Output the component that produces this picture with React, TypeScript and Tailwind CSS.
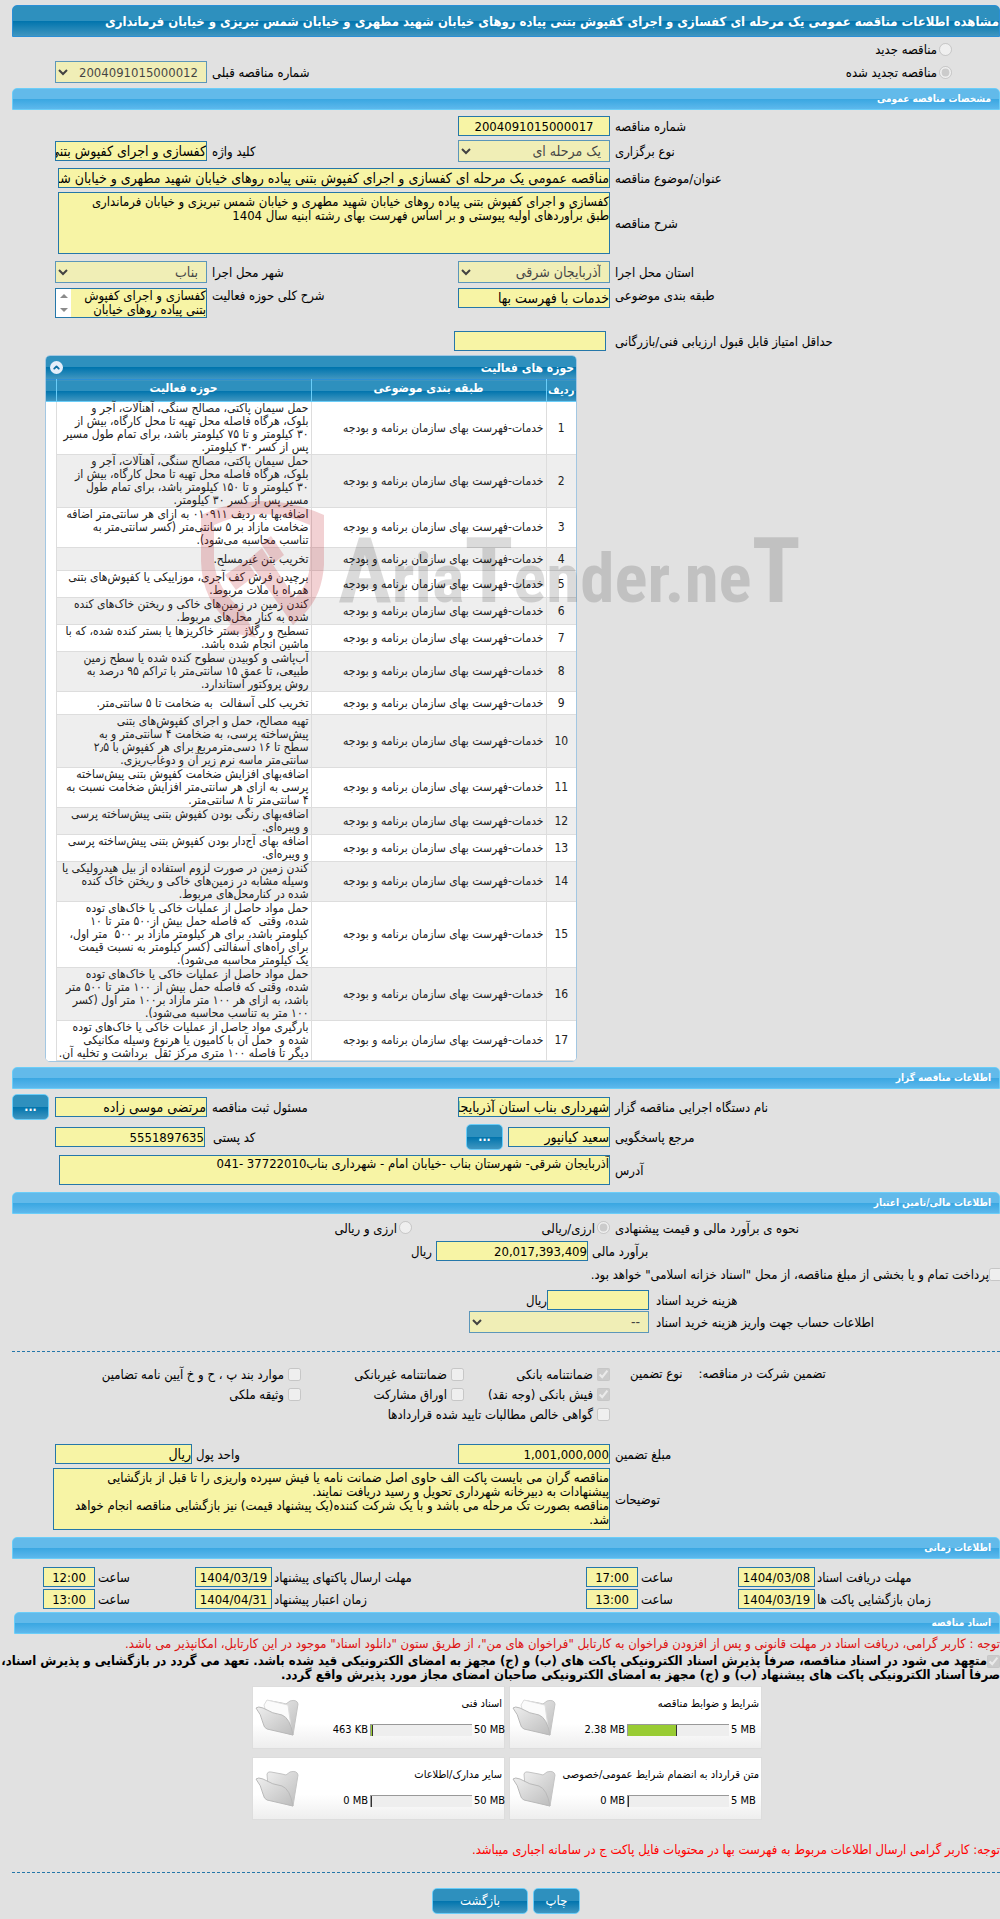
import React from 'react';
import { ChevronUp } from 'lucide-react';

const box = 'border border-[#2577a9] bg-[#f7f4a5] text-black outline-none';
const darkBar =
  'bg-[linear-gradient(to_bottom,#2e90be_0%,#2e90be_50%,#0074ad_50%,#4096c0_100%)] text-white';
const fieldRow = 'grid grid-cols-[1fr_152px_251px_152px_55px]';

const SectionBar: React.FC<{ title: string }> = ({ title }) => (
  <h2 className="ml-3 h-[22px] rounded-t-[5px] border border-[#6acdf8] bg-[linear-gradient(to_bottom,#62baea_0%,#62baea_48%,#38a6e1_48%,#5db8ec_100%)] pr-2 text-[10px] leading-5 font-bold text-white">
    {title}
  </h2>
);

const Label: React.FC<{ id: string; text: string; className?: string }> = ({ id, text, className = 'pl-[5px]' }) => (
  <label htmlFor={id} className={`pt-0.5 text-left leading-5 whitespace-nowrap ${className}`}>
    {text}
  </label>
);

const Field: React.FC<{ id: string; value?: string; numeric?: boolean; className?: string }> = ({
  id,
  value = '',
  numeric = false,
  className = '',
}) => (
  <input
    id={id}
    type="text"
    readOnly
    defaultValue={value}
    className={`${box} h-5 w-full min-w-0 ${numeric ? 'text-[13px]' : 'text-[14px]'} ${className}`}
  />
);

const Picker: React.FC<{ id: string; value: string; numeric?: boolean }> = ({ id, value, numeric = false }) => (
  <select id={id} disabled className={`${box} h-[22px] w-full px-1 opacity-70 ${numeric ? 'text-[13px]' : 'text-[14px]'}`}>
    <option>{value}</option>
  </select>
);

const Tick: React.FC<{ id: string; text: string; checked?: boolean; type?: string; className?: string }> = ({
  id,
  text,
  checked = false,
  type = 'checkbox',
  className = 'gap-1',
}) => (
  <span className={`flex items-center ${className}`}>
    <input id={id} type={type} disabled defaultChecked={checked} className="size-[13px] shrink-0" />
    <label htmlFor={id} className="pt-0.5 leading-[18px] whitespace-nowrap">
      {text}
    </label>
  </span>
);

const MoreButton: React.FC = () => (
  <button type="button" className={`${darkBar} h-[26px] w-[37px] rounded-[5px] border border-[#6acdf8] text-xs font-bold`}>
    ...
  </button>
);

const DashedLine: React.FC = () => <hr className="ml-3 border-0 border-t border-dashed border-[#2577a9]" />;

const activities: string[] = [
  'حمل سیمان پاکتی، مصالح سنگی، آهنآلات، آجر و\nبلوک، هرگاه فاصله محل تهیه تا محل کارگاه، بیش از\n۳۰ کیلومتر و تا ۷۵ کیلومتر باشد، برای تمام طول مسیر\nپس از کسر ۳۰ کیلومتر.',
  'حمل سیمان پاکتی، مصالح سنگی، آهنآلات، آجر و\nبلوک، هرگاه فاصله محل تهیه تا محل کارگاه، بیش از\n۳۰ کیلومتر و تا ۱۵۰ کیلومتر باشد، برای تمام طول\nمسیر پس از کسر ۳۰ کیلومتر.',
  'اضافه‌بها به ردیف ۰۱۰۹۱۱ به ازای هر سانتی‌متر اضافه\nضخامت مازاد بر ۵ سانتی‌متر (کسر سانتی‌متر به\nتناسب محاسبه می‌شود).',
  'تخریب بتن غیرمسلح.',
  'برچیدن فرش کف آجری، موزاییکی یا کفپوش‌های بتنی\nهمراه با ملات مربوط.',
  'کندن زمین در زمین‌های خاکی و ریختن خاک‌های کنده\nشده به کنار محل‌های مربوط.',
  'تسطیح و رگلاژ بستر خاکریزها یا بستر کنده شده، که با\nماشین انجام شده باشد.',
  'آب‌پاشی و کوبیدن سطوح کنده شده یا سطح زمین\nطبیعی، تا عمق ۱۵ سانتی‌متر با تراکم ۹۵ درصد به\nروش پروکتور استاندارد.',
  'تخریب کلی آسفالت  به ضخامت تا ۵ سانتی‌متر.',
  'تهیه مصالح، حمل و اجرای کفپوش‌های بتنی\nپیش‌ساخته پرسی، به ضخامت ۴ سانتی‌متر و به\nسطح تا ۱۶ دسی‌مترمربع برای هر کفپوش با ۲٫۵\nسانتی‌متر ماسه نرم زیر آن و دوغاب‌ریزی.',
  'اضافه‌بهای افزایش ضخامت کفپوش بتنی پیش‌ساخته\nپرسی به ازای هر سانتی‌متر افزایش ضخامت نسبت به\n۴ سانتی‌متر تا ۸ سانتی‌متر.',
  'اضافه‌بهای رنگی بودن کفپوش بتنی پیش‌ساخته پرسی\nو ویبره‌ای.',
  'اضافه بهای آج‌دار بودن کفپوش بتنی پیش‌ساخته پرسی\nو ویبره‌ای.',
  'کندن زمین در صورت لزوم استفاده از بیل هیدرولیکی یا\nوسیله مشابه در زمین‌های خاکی و ریختن خاک کنده\nشده در کنارمحل‌های مربوط.',
  'حمل مواد حاصل از عملیات خاکی یا خاک‌های توده\nشده، وقتی  که فاصله حمل بیش از۵۰۰ متر تا ۱۰\nکیلومتر باشد، برای هر کیلومتر مازاد بر ۵۰۰  متر اول،\nبرای راه‌های آسفالتی (کسر کیلومتر به نسبت قیمت\nیک کیلومتر محاسبه می‌شود).',
  'حمل مواد حاصل از عملیات خاکی یا خاک‌های توده\nشده، وقتی که فاصله حمل بیش از ۱۰۰ متر تا ۵۰۰ متر\nباشد، به ازای هر ۱۰۰ متر مازاد بر۱۰۰ متر اول (کسر\n۱۰۰ متر به تناسب محاسبه می‌شود).',
  'بارگیری مواد حاصل از عملیات خاکی یا خاک‌های توده\nشده و  حمل آن با کامیون یا هرنوع وسیله مکانیکی\nدیگر تا فاصله ۱۰۰ متری مرکز ثقل  برداشت و تخلیه آن.',
];

const ActivityPanel: React.FC = () => (
  <section className="mt-[5px] mr-auto ml-[45px] w-[532px] overflow-hidden rounded-[5px] border border-[#a3c7e2] bg-white">
    <div className={`${darkBar} flex h-[23px] items-center justify-between pr-0.5 pl-1`}>
      <h3 className="text-[12px] font-bold">حوزه های فعالیت</h3>
      <button type="button" aria-label="بستن" className="flex size-[13px] items-center justify-center rounded-full bg-[#e4eefa] text-[#0b6ea3]">
        <ChevronUp className="size-[9px]" strokeWidth={5} />
      </button>
    </div>
    <table className="w-full table-fixed border-collapse text-[12px] leading-[13px]">
      <colgroup>
        <col className="w-[30px]" />
        <col className="w-[235px]" />
        <col />
        <col className="w-[10px]" />
      </colgroup>
      <thead>
        <tr className={`${darkBar} h-[22px] border-t border-b border-t-[#2b8fd6] border-b-[#6acdf8]`}>
          <th className="border-l border-[#6acdf8] p-0 text-[11px]">ردیف</th>
          <th className="border-l border-[#6acdf8] p-0 pb-1">طبقه بندی موضوعی</th>
          <th className="border-l border-[#6acdf8] p-0 pb-1">حوزه فعالیت</th>
          <td />
        </tr>
      </thead>
      <tbody>
        {activities.map((text, i) => (
          <tr key={i} className="h-[23px] text-[#222] odd:bg-white even:bg-[#eeeeee]">
            <td className="border-b border-l border-[#dddddd] p-0 text-center">{i + 1}</td>
            <td className="border-b border-l border-[#dddddd] py-0 pr-0.5 pl-0 whitespace-nowrap">خدمات-فهرست بهای سازمان برنامه و بودجه</td>
            <td className="border-b border-l border-[#dddddd] py-0 pr-0.5 pl-0 whitespace-pre">{text}</td>
            <td className="bg-white" />
          </tr>
        ))}
      </tbody>
    </table>
  </section>
);

const Watermark: React.FC = () => (
  <svg aria-hidden="true" viewBox="0 0 620 150" className="pointer-events-none absolute top-[499px] left-[200px] h-[150px] w-[620px]">
    <g fill="#c01822" fillOpacity="0.2">
      <path
        fillRule="evenodd"
        d="M1 16Q62-12 124 16V66Q122 96 105 114L93 126L48 61L62 49L95 99Q110 84 110 62V26Q62 4 14 26V62Q16 90 44 113L56 139L24 132L31 125Q2 102 1 62Z"
      />
      <path d="M25 76L46 61L56 76L36 91Z" />
      <path d="M61 45L71 37L84 56L74 64Z" />
    </g>
    <text x="138" y="103" direction="ltr" fontSize="69" fillOpacity="0.14" className="font-['Roboto_Condensed','Roboto',sans-serif] font-bold">
      <tspan fontSize="90">A</tspan>ria<tspan fontSize="90">T</tspan>ender.ne<tspan fontSize="90">T</tspan>
    </text>
  </svg>
);

const Folder: React.FC<{ full: boolean }> = ({ full }) => (
  <svg viewBox="0 0 46 42" className="h-[42px] w-[46px]" aria-hidden="true">
    <defs>
      <linearGradient id="folder" x1="0" y1="0" x2="1" y2="1">
        <stop offset="0" stopColor="#eeeeee" />
        <stop offset="1" stopColor="#bdbdbd" />
      </linearGradient>
    </defs>
    <path d="M12 6Q13 3 16 4L27 6L31 7L35 4Q42 2 43 7L38 38L14 31Z" fill="url(#folder)" stroke="#c4c4c4" />
    {full && <path d="M9 8L12 3L33 8L36 30L14 27Z" fill="#fbfbfb" stroke="#dddddd" />}
    <path d="M1 11Q3 9 8 11Q18 17 27 18Q35 21 38 38L12 32Q9 31 8 26Q6 17 1 11Z" fill="url(#folder)" stroke="#b9b9b9" />
  </svg>
);

const documents = [
  { title: 'شرایط و ضوابط مناقصه', max: '5 MB', used: '2.38 MB', percent: 49, full: true },
  { title: 'اسناد فنی', max: '50 MB', used: '463 KB', percent: 2, full: true },
  { title: 'متن قرارداد به انضمام شرایط عمومی/خصوصی', max: '5 MB', used: '0 MB', percent: 1, full: false },
  { title: 'سایر مدارک/اطلاعات', max: '50 MB', used: '0 MB', percent: 1, full: false },
];

const deadlines = [
  { first: 'مهلت دریافت اسناد', date: '1404/03/08', time: '17:00', second: 'مهلت ارسال پاکتهای پیشنهاد', date2: '1404/03/19', time2: '12:00' },
  { first: 'زمان بازگشایی پاکت ها', date: '1404/03/19', time: '13:00', second: 'زمان اعتبار پیشنهاد', date2: '1404/04/31', time2: '13:00' },
];

const App: React.FC = () => {
  return (
    <main
      dir="rtl"
      className="relative overflow-hidden bg-[#e1e1e1] pt-[5px] pb-[5px] font-['DejaVu_Sans_Condensed','DejaVu_Sans',sans-serif] text-[13px] text-black"
    >
      <h1 className={`${darkBar} ml-3 h-8 rounded-t-[5px] border border-[#2b8fd6] text-[13px] leading-8 font-bold whitespace-nowrap`}>
        مشاهده اطلاعات مناقصه عمومی یک مرحله ای کفسازی و اجرای کفپوش بتنی پیاده روهای خیابان شهید مطهری و خیابان شمس تبریزی و خیابان فرمانداری
      </h1>
      <div className="h-6 pt-0.5 pr-12">
        <Tick id="new-tender" type="radio" text="مناقصه جدید" className="gap-0.5" />
      </div>
      <div className={`${fieldRow} mb-[5px] items-center`}>
        <Tick id="renewed-tender" type="radio" text="مناقصه تجدید شده" checked className="gap-0.5 pr-12" />
        <span />
        <Label id="previous" text="شماره مناقصه قبلی" />
        <Picker id="previous" value="2004091015000012" numeric />
      </div>

      <SectionBar title="مشخصات مناقصه عمومی" />
      <div className="mt-[5px] flex flex-col gap-[5px]">
        <div className={`${fieldRow} h-5 items-center`}>
          <Label id="number" text="شماره مناقصه" />
          <Field id="number" value="2004091015000017" numeric className="text-center" />
        </div>
        <div className={`${fieldRow} items-center`}>
          <Label id="kind" text="نوع برگزاری" />
          <Picker id="kind" value="یک مرحله ای" />
          <Label id="keyword" text="کلید واژه" />
          <Field id="keyword" value="کفسازی و اجرای کفپوش بتنی پیاده روهای خیابان" />
        </div>
        <div className={`${fieldRow} h-5 items-center`}>
          <Label id="subject" text="عنوان/موضوع مناقصه" />
          <div className="col-span-3 pl-[3px]">
            <Field
              id="subject"
              value="مناقصه عمومی یک مرحله ای کفسازی و اجرای کفپوش بتنی پیاده روهای خیابان شهید مطهری و خیابان شمس تبریزی"
              className="block"
            />
          </div>
        </div>
        <div className={`${fieldRow} items-center`}>
          <Label id="description" text="شرح مناقصه" />
          <div className="col-span-3 pl-[3px]">
            <textarea
              id="description"
              readOnly
              className={`${box} block h-[62px] w-full resize-none overflow-hidden px-0 pt-0.5 text-[13px] leading-[14px] whitespace-pre`}
              defaultValue={
                'کفسازی و اجرای کفپوش بتنی پیاده روهای خیابان شهید مطهری و خیابان شمس تبریزی و خیابان فرمانداری\nطبق برآوردهای اولیه پیوستی و بر اساس فهرست بهای رشته ابنیه سال 1404'
              }
            />
          </div>
        </div>
        <div className={`${fieldRow} mt-0.5 items-center`}>
          <Label id="province" text="استان محل اجرا" />
          <Picker id="province" value="آذربایجان شرقی" />
          <Label id="city" text="شهر محل اجرا" />
          <Picker id="city" value="بناب" />
        </div>
        <div className={`${fieldRow} items-start`}>
          <Label id="category" text="طبقه بندی موضوعی" className="-mt-1 pl-[5px]" />
          <Field id="category" value="خدمات با فهرست بها" />
          <Label id="activity" text="شرح کلی حوزه فعالیت" className="-mt-1 pl-[5px]" />
          <div className={`${box} flex h-[30px]`}>
            <textarea
              id="activity"
              readOnly
              className="h-full w-full min-w-0 resize-none overflow-hidden text-[13px] leading-[14px] whitespace-pre"
              defaultValue={'کفسازی و اجرای کفپوش\nبتنی پیاده روهای خیابان'}
            />
            <span aria-hidden="true" className="flex w-[15px] shrink-0 flex-col items-center justify-between bg-white py-[5px]">
              <i className="border-x-4 border-b-4 border-x-transparent border-b-[#8b8b8b]" />
              <i className="border-x-4 border-t-4 border-x-transparent border-t-[#8b8b8b]" />
            </span>
          </div>
        </div>
        <div className="mt-[7px] grid h-5 grid-cols-[1fr_152px_454px] items-center">
          <Label id="score" text="حداقل امتیاز قابل قبول ارزیابی فنی/بازرگانی" className="pl-[9px]" />
          <Field id="score" />
        </div>
      </div>

      <ActivityPanel />

      <div className="mt-[5px]">
        <SectionBar title="اطلاعات مناقصه گزار" />
      </div>
      <div className={`${fieldRow} mt-[5px] items-center`}>
        <Label id="agency" text="نام دستگاه اجرایی مناقصه گزار" />
        <Field id="agency" value="شهرداری بناب استان آذربایجان شرقی" />
        <Label id="registrar" text="مسئول ثبت مناقصه" />
        <Field id="registrar" value="مرتضی موسی زاده" />
        <div className="flex justify-end pl-3">
          <MoreButton />
        </div>
      </div>
      <div className="mt-[4px] grid grid-cols-[1fr_102px_42px_261px_150px_55px] items-center">
        <Label id="contact" text="مرجع پاسخگویی" />
        <Field id="contact" value="سعید کیانپور" />
        <div className="flex justify-end">
          <MoreButton />
        </div>
        <Label id="postcode" text="کد پستی" className="pl-2" />
        <Field id="postcode" value="5551897635" numeric />
      </div>
      <div className={`${fieldRow} mt-[5px] items-center`}>
        <Label id="address" text="آدرس" />
        <div className="col-span-3 pl-1">
          <textarea
            id="address"
            readOnly
            className={`${box} block h-[30px] w-full resize-none overflow-hidden text-[13px] leading-4 whitespace-pre`}
            defaultValue="آذربایجان شرقی- شهرستان بناب -خیابان امام - شهرداری بناب37722010 -041"
          />
        </div>
      </div>

      <div className="mt-[7px]">
        <SectionBar title="اطلاعات مالی/تامین اعتبار" />
      </div>
      <div className={`${fieldRow} mt-[3px] h-5 items-center`}>
        <span className="pt-0.5 pl-[5px] text-left">نحوه ی برآورد مالی و قیمت پیشنهادی</span>
        <Tick id="rial" type="radio" text="ارزی/ریالی" checked className="gap-0.5" />
        <Tick id="currency" type="radio" text="ارزی و ریالی" className="gap-0.5 pr-[46px]" />
      </div>
      <div className="mt-[3px] grid h-5 grid-cols-[1fr_152px_436px] items-center">
        <Label id="estimate" text="برآورد مالی" className="pl-1" />
        <Field id="estimate" value="20,017,393,409" numeric />
        <span className="pt-0.5 pr-1">ریال</span>
      </div>
      <div className="-mr-0.5 pt-1">
        <Tick id="treasury" text={'پرداخت تمام و یا بخشی از مبلغ مناقصه، از محل "اسناد خزانه اسلامی" خواهد بود.'} className="" />
      </div>
      <div className="mt-[5px] grid h-5 grid-cols-[1fr_102px_547px] items-center">
        <Label id="price" text="هزینه خرید اسناد" className="pl-[7px]" />
        <Field id="price" />
        <span className="pt-0.5">ریال</span>
      </div>
      <div className="mt-0.5 grid grid-cols-[1fr_180px_469px] items-center">
        <Label id="account" text="اطلاعات حساب جهت واریز هزینه خرید اسناد" className="pl-[7px]" />
        <Picker id="account" value="--" />
      </div>
      <div className="mt-[18px]">
        <DashedLine />
      </div>

      <div className="mt-3 grid grid-cols-[1fr_146px_163px_301px]">
        <div className="flex justify-end gap-4 pl-5 leading-5">
          <span>تضمین شرکت در مناقصه:</span>
          <span>نوع تضمین</span>
        </div>
        <Tick id="g1" text="ضمانتنامه بانکی" checked />
        <Tick id="g2" text="ضمانتنامه غیربانکی" />
        <Tick id="g3" text="موارد بند پ ، ح و خ آیین نامه تضامین" />
        <span />
        <Tick id="g4" text="فیش بانکی (وجه نقد)" checked />
        <Tick id="g5" text="اوراق مشارکت" />
        <Tick id="g6" text="وثیقه ملکی" />
        <span />
        <Tick id="g7" text="گواهی خالص مطالبات تایید شده قراردادها" />
      </div>
      <div className="mt-[19px] grid h-5 grid-cols-[1fr_152px_266px_137px_55px] items-center">
        <Label id="amount" text="مبلغ تضمین" />
        <Field id="amount" value="1,001,000,000" numeric />
        <Label id="unit" text="واحد پول" className="pl-1" />
        <Field id="unit" value="ریال" />
      </div>
      <div className="mt-[5px] grid grid-cols-[1fr_557px_53px] items-center">
        <Label id="notes" text="توضیحات" />
        <textarea
          id="notes"
          readOnly
          className={`${box} block h-[62px] w-full resize-none overflow-hidden pt-0.5 text-[13px] leading-[14px] whitespace-pre`}
          defaultValue={
            'مناقصه گران می بایست پاکت الف حاوی اصل ضمانت نامه یا فیش سپرده واریزی را تا قبل از بازگشایی\nپیشنهادات به دبیرخانه شهرداری تحویل و رسید دریافت نمایند.\nمناقصه بصورت تک مرحله می باشد و با یک شرکت کننده(یک پیشنهاد قیمت) نیز بازگشایی مناقصه انجام خواهد\nشد.'
          }
        />
      </div>

      <div className="mt-[7px]">
        <SectionBar title="اطلاعات زمانی" />
      </div>
      <div className="mt-[7px] flex flex-col gap-0.5">
        {deadlines.map((row, i) => (
          <div key={i} className="grid h-5 grid-cols-[1fr_77px_100px_52px_314px_77px_100px_52px_43px] items-center">
            <Label id={`date-${i}`} text={row.first} className="pl-0.5" />
            <Field id={`date-${i}`} value={row.date} numeric className="text-center" />
            <Label id={`time-${i}`} text="ساعت" className="pl-[3px]" />
            <Field id={`time-${i}`} value={row.time} numeric className="text-center" />
            <Label id={`end-date-${i}`} text={row.second} className="pl-0.5" />
            <Field id={`end-date-${i}`} value={row.date2} numeric className="text-center" />
            <Label id={`end-time-${i}`} text="ساعت" className="pl-[3px]" />
            <Field id={`end-time-${i}`} value={row.time2} numeric className="text-center" />
          </div>
        ))}
      </div>

      <div className="mt-1 pl-0.5">
        <SectionBar title="اسناد مناقصه" />
      </div>
      <p className="leading-5 whitespace-nowrap text-[#dd1111]">
        توجه : کاربر گرامی، دریافت اسناد در مهلت قانونی و پس از افزودن فراخوان به کارتابل "فراخوان های من"، از طریق ستون "دانلود اسناد" موجود در این کارتابل، امکانپذیر می باشد.
      </p>
      <p className="leading-[14px] font-bold whitespace-nowrap">
        <input id="commit" type="checkbox" disabled defaultChecked className="inline-block size-[13px] align-text-bottom" />
        <label htmlFor="commit">
          متعهد می شود در اسناد مناقصه، صرفاً پذیرش اسناد الکترونیکی پاکت های (ب) و (ج) مجهز به امضای الکترونیکی قید شده باشد. تعهد می گردد در بازگشایی و پذیرش اسناد،
          <br />
          صرفاً اسناد الکترونیکی پاکت های پیشنهاد (ب) و (ج) مجهز به امضای الکترونیکی صاحبان امضای مجاز مورد پذیرش واقع گردد.
        </label>
      </p>
      <div className="mt-1 mr-auto ml-[252px] grid w-[510px] grid-cols-2 gap-x-1 gap-y-2">
        {documents.map((doc) => (
          <article key={doc.title} className="flex h-[63px] justify-between border border-[#dddddd] bg-gradient-to-b from-white from-60% to-[#eeeeee] pl-0.5">
            <div className="min-w-0 flex-1 pt-[7px] pr-0.5 text-[11px]">
              <h3 className="h-5 leading-5 whitespace-nowrap">{doc.title}</h3>
              <div className="mt-2 flex items-center" dir="ltr">
                <span className="flex-1 pr-0.5 text-right leading-4 whitespace-nowrap">{doc.used}</span>
                <span className="h-3 w-[102px] shrink-0 border-t border-l border-[#999999] bg-[#eeeeee]">
                  <span className="block h-full border-r border-[#333333] bg-[#99cc33]" style={{ width: `${doc.percent}%` }} />
                </span>
                <span className="w-[30px] shrink-0 pl-0.5 leading-4 whitespace-nowrap">{doc.max}</span>
              </div>
            </div>
            <div className="pt-2.5">
              <Folder full={doc.full} />
            </div>
          </article>
        ))}
      </div>
      <p className="mt-5 leading-5 text-[#ff0000]">
        توجه: کاربر گرامی ارسال اطلاعات مربوط به فهرست بها در محتویات فایل پاکت ج در سامانه اجباری میباشد.
      </p>
      <div className="mt-3">
        <DashedLine />
      </div>
      <div className="mt-[15px] ml-3 flex justify-center gap-[5px]">
        <button type="button" className={`${darkBar} h-[26px] w-[47px] rounded-[5px] border border-[#6acdf8]`}>
          چاپ
        </button>
        <button type="button" className={`${darkBar} h-[26px] w-24 rounded-[5px] border border-[#6acdf8]`}>
          بازگشت
        </button>
      </div>
      <Watermark />
    </main>
  );
};

export default App;
